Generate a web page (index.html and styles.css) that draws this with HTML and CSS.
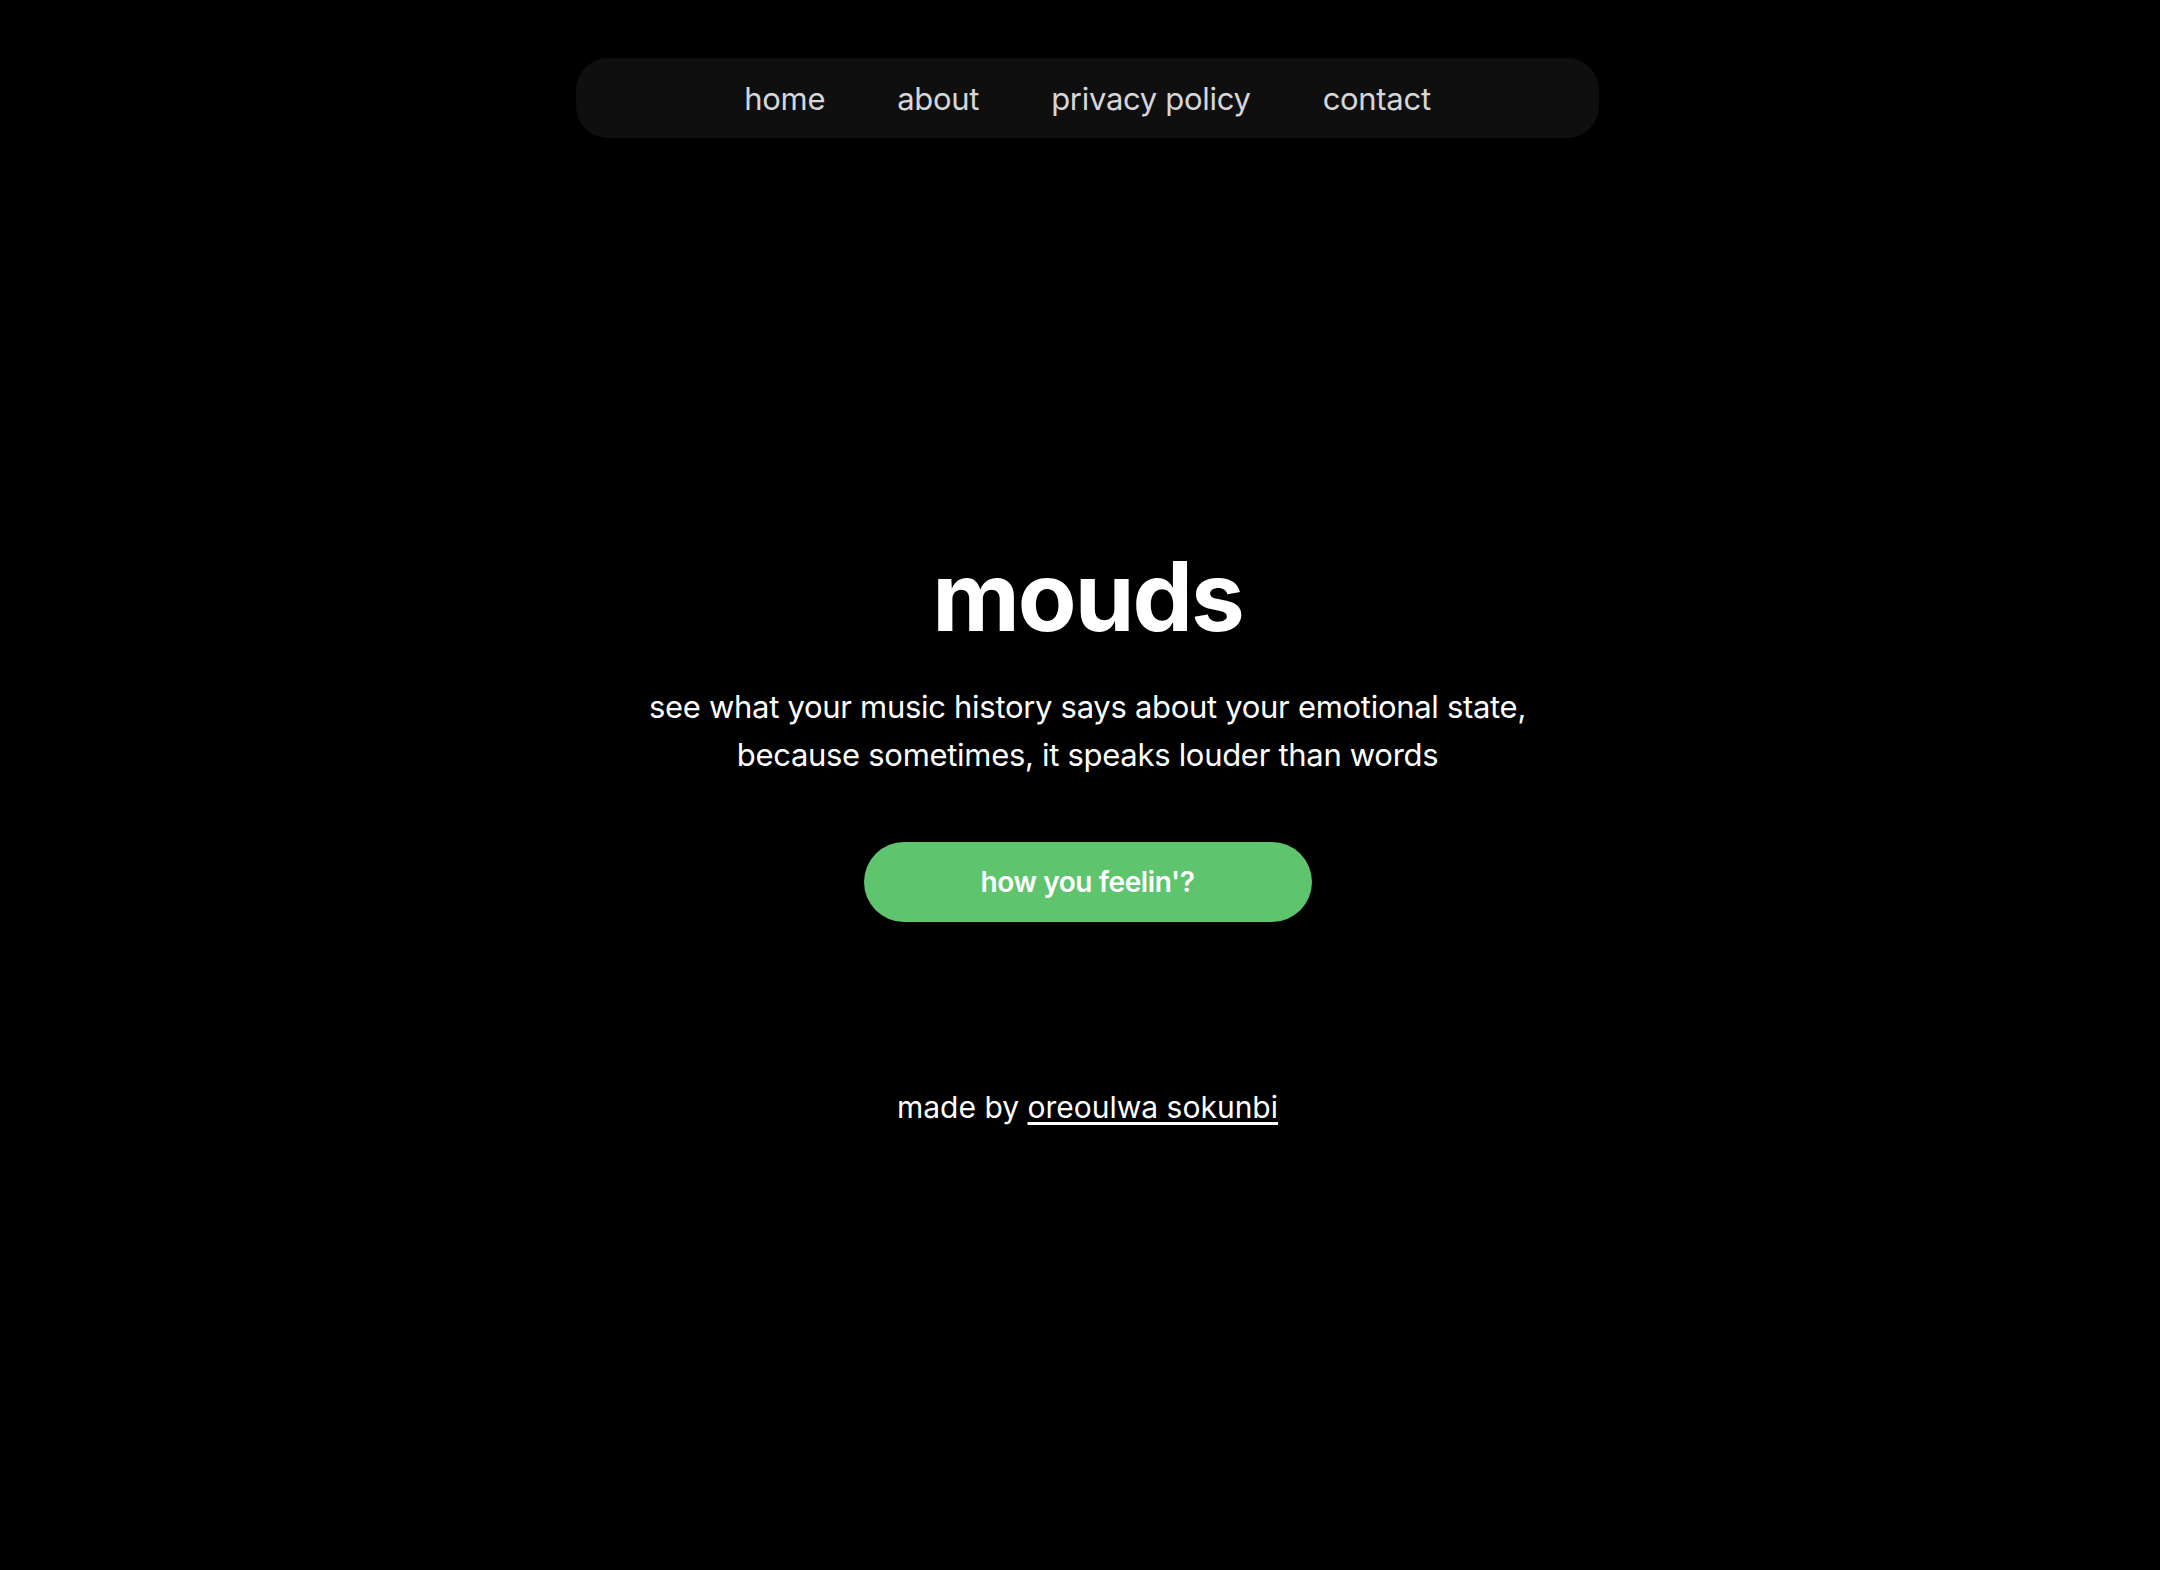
FILE: index.html
```html
<!DOCTYPE html>
<html lang="en">
<head>
<meta charset="utf-8">
<title>mouds</title>
<link rel="stylesheet" href="styles.css">
</head>
<body>
<div class="page">
  <nav class="nav">
    <a class="nav-link" href="#">home</a>
    <a class="nav-link" href="#">about</a>
    <a class="nav-link" href="#">privacy policy</a>
    <a class="nav-link" href="#">contact</a>
  </nav>
  <main class="hero">
    <h1 class="title">mouds</h1>
    <p class="subtitle">see what your music history says about your emotional state,<br>because sometimes, it speaks louder than words</p>
    <a class="cta" href="#">how you feelin'?</a>
    <p class="credit">made by <a class="credit-link" href="#">oreoulwa sokunbi</a></p>
  </main>
</div>
</body>
</html>
```
FILE: styles.css
```css
* { box-sizing: border-box; }
html, body { margin: 0; padding: 0; background: #000; }
body {
  font-family: Inter, "Noto Sans", "Liberation Sans", sans-serif;
  color: #fff;
  min-height: 1570px;
}
.page {
  display: flex;
  flex-direction: column;
  align-items: center;
  padding: 58px 0 0 15px;
}
.nav {
  width: 1023px;
  height: 80px;
  background: #0f0f0f;
  border-radius: 32px;
  display: flex;
  align-items: center;
  justify-content: center;
  gap: 72px;
}
.nav-link {
  color: #d6d6da;
  text-decoration: none;
  font-size: 31px;
  letter-spacing: -0.3px;
}
.hero {
  display: flex;
  flex-direction: column;
  align-items: center;
  margin-top: 410px;
}
.title {
  margin: 0;
  font-size: 96px;
  line-height: 1;
  font-weight: 700;
  letter-spacing: -2px;
}
.subtitle {
  margin: 39px 0 0;
  font-size: 31px;
  line-height: 48px;
  text-align: center;
  letter-spacing: -0.3px;
}
.cta {
  margin-top: 63px;
  width: 448px;
  height: 80px;
  border-radius: 40px;
  background: #5ec46d;
  color: #fff;
  text-decoration: none;
  font-size: 28px;
  font-weight: 600;
  letter-spacing: -0.4px;
  display: flex;
  align-items: center;
  justify-content: center;
}
.credit {
  margin: 167px 0 0;
  font-size: 30px;
  line-height: 1.2;
}
.credit-link {
  color: #fff;
  text-decoration: underline;
  text-underline-offset: 4px;
}
```
